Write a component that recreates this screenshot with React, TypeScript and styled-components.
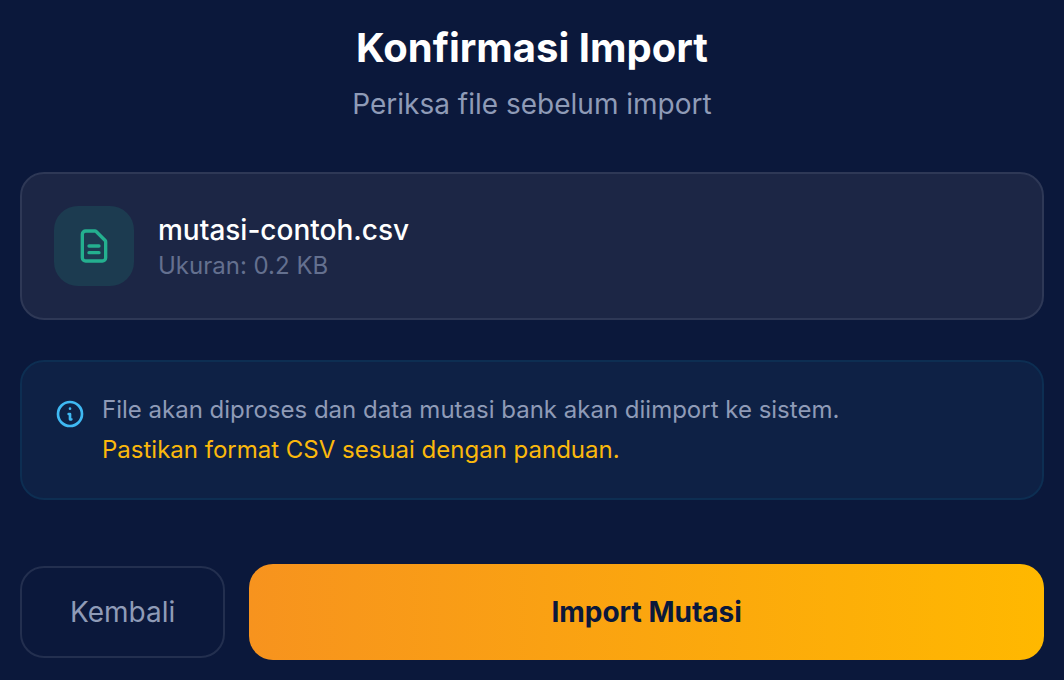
import React from "react";
import styled, { createGlobalStyle } from "styled-components";

const GlobalStyle = createGlobalStyle`
  * { box-sizing: border-box; }
  body {
    margin: 0;
    background: #0b183b;
    font-family: Inter, "Liberation Sans", sans-serif;
    -webkit-font-smoothing: antialiased;
  }
`;

const Page = styled.main`
  display: flex;
  flex-direction: column;
  padding: 20px;
`;

const Header = styled.header`
  text-align: center;
  margin-bottom: 48px;
`;

const Title = styled.h1`
  margin: 0 0 8px;
  font-size: 40px;
  line-height: 56px;
  font-weight: 700;
  color: #ffffff;
`;

const Subtitle = styled.p`
  margin: 0;
  font-size: 28px;
  line-height: 40px;
  color: #8f9bb7;
`;

const FileCard = styled.section`
  display: flex;
  align-items: center;
  gap: 24px;
  padding: 32px;
  border: 2px solid #2e3856;
  border-radius: 24px;
  background: #1c2645;
  margin-bottom: 40px;
`;

const FileIconBox = styled.div`
  display: flex;
  align-items: center;
  justify-content: center;
  width: 80px;
  height: 80px;
  border-radius: 24px;
  background: #1c3b50;
`;

const FileName = styled.h2`
  margin: 0;
  font-size: 28px;
  line-height: 40px;
  font-weight: 500;
  color: #ffffff;
`;

const FileSize = styled.p`
  margin: 0;
  font-size: 24px;
  line-height: 32px;
  color: #64708f;
`;

const Notice = styled.section`
  display: flex;
  align-items: flex-start;
  gap: 16px;
  padding: 32px;
  border: 2px solid #0d2e52;
  border-radius: 24px;
  background: #0e2145;
  margin-bottom: 64px;
`;

const NoticeIcon = styled.svg`
  flex: none;
  margin-top: 4px;
`;

const NoticeText = styled.p<{ $warning?: boolean }>`
  margin: 0;
  font-size: 24px;
  line-height: 32px;
  color: ${({ $warning }) => ($warning ? "#fbb90c" : "#8f9bb7")};
  & + & { margin-top: 8px; }
`;

const Actions = styled.div`
  display: flex;
  align-items: center;
  gap: 24px;
`;

const Button = styled.button`
  font-family: inherit;
  font-size: 28px;
  line-height: 40px;
  border-radius: 24px;
  cursor: pointer;
`;

const BackButton = styled(Button)`
  padding: 24px 48px;
  border: 2px solid #232f4f;
  background: transparent;
  color: #8f9bb7;
`;

const ImportButton = styled(Button)`
  flex: 1;
  padding: 28px;
  border: 0;
  background: linear-gradient(90deg, #f7931e, #ffb800);
  color: #0b183b;
  font-weight: 700;
`;

export default function App() {
  return (
    <>
      <GlobalStyle />
      <Page>
        <Header>
          <Title>Konfirmasi Import</Title>
          <Subtitle>Periksa file sebelum import</Subtitle>
        </Header>
        <FileCard>
          <FileIconBox>
            <svg width="40" height="40" viewBox="0 0 24 24" fill="none" stroke="#24b08f" strokeWidth="2" strokeLinecap="round" strokeLinejoin="round" aria-hidden="true">
              <path d="M9 12h6m-6 4h6m2 5H7a2 2 0 01-2-2V5a2 2 0 012-2h5.586a1 1 0 01.707.293l5.414 5.414a1 1 0 01.293.707V19a2 2 0 01-2 2z" />
            </svg>
          </FileIconBox>
          <div>
            <FileName>mutasi-contoh.csv</FileName>
            <FileSize>Ukuran: 0.2 KB</FileSize>
          </div>
        </FileCard>
        <Notice>
          <NoticeIcon width="32" height="32" viewBox="0 0 24 24" fill="none" stroke="#3fb9f3" strokeWidth="2" strokeLinecap="round" strokeLinejoin="round" aria-hidden="true">
            <path d="M13 16h-1v-4h-1m1-4h.01M21 12a9 9 0 11-18 0 9 9 0 0118 0z" />
          </NoticeIcon>
          <div>
            <NoticeText>File akan diproses dan data mutasi bank akan diimport ke sistem.</NoticeText>
            <NoticeText $warning>Pastikan format CSV sesuai dengan panduan.</NoticeText>
          </div>
        </Notice>
        <Actions>
          <BackButton type="button">Kembali</BackButton>
          <ImportButton type="button">Import Mutasi</ImportButton>
        </Actions>
      </Page>
    </>
  );
}
